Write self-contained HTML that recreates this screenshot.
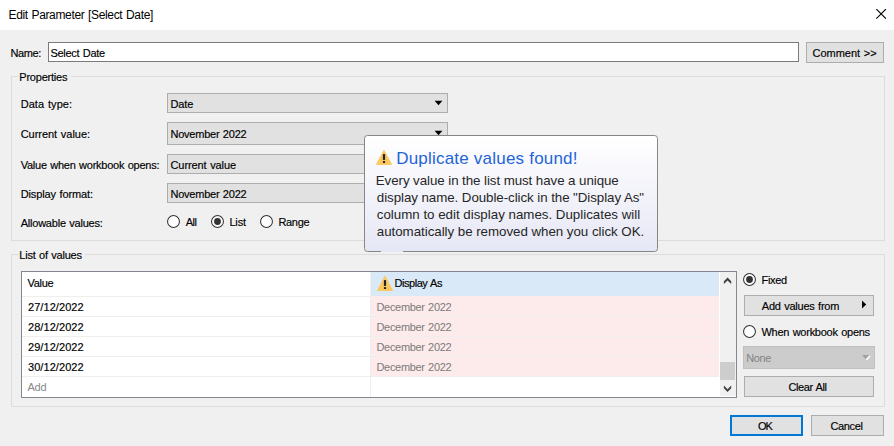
<!DOCTYPE html>
<html lang="en">
<head>
<meta charset="utf-8">
<title>Edit Parameter [Select Date]</title>
<style>
html,body{margin:0;padding:0;}
body{width:894px;height:446px;overflow:hidden;background:#f0f0f0;font-family:"Liberation Sans",sans-serif;position:relative;}
.abs,.t,.box{position:absolute;}
.t{white-space:pre;font-family:"Liberation Sans",sans-serif;}
.titlebar{left:0;top:0;width:894px;height:30px;background:#fff;}
.group{border:1px solid #dcdcdc;box-sizing:border-box;}
.combo{background:#e1e1e1;border:1px solid #adadad;box-sizing:border-box;}
.btn{background:#e1e1e1;border:1px solid #adadad;box-sizing:border-box;}
.b{-webkit-text-stroke:0.16px currentColor;}
.glabel{background:#f0f0f0;height:12px;}
</style>
</head>
<body>
<div class="abs titlebar"></div>
<svg class="abs" style="left:876px;top:9px" width="11" height="11" viewBox="0 0 11 11"><path d="M0.3 0.1 L9.9 9.7 M9.9 0.1 L0.3 9.7" stroke="#000" stroke-width="1.15" fill="none"/></svg>

<!-- name row -->
<div class="abs" style="left:48px;top:42px;width:751px;height:20px;box-sizing:border-box;border:1px solid #7a7a7a;background:#fff"></div>
<div class="abs btn" style="left:806px;top:42px;width:78px;height:21px"></div>

<!-- properties group -->
<div class="abs group" style="left:11px;top:76px;width:874px;height:165px"></div>
<div class="abs glabel" style="left:19px;top:70px;width:52px"></div>
<div class="abs combo" style="left:167px;top:93px;width:281px;height:20px"></div>
<svg class="abs" style="left:434px;top:100px" width="9" height="6" viewBox="0 0 9 6"><path d="M0.6 0.8 L8.4 0.8 L4.5 5.3 Z" fill="#000"/></svg>
<div class="abs combo" style="left:167px;top:122px;width:281px;height:23px"></div>
<svg class="abs" style="left:434px;top:130px" width="9" height="6" viewBox="0 0 9 6"><path d="M0.6 0.8 L8.4 0.8 L4.5 5.3 Z" fill="#000"/></svg>
<div class="abs combo" style="left:167px;top:154px;width:281px;height:20px"></div>
<div class="abs combo" style="left:167px;top:183px;width:281px;height:20px"></div>
<svg class="abs" style="left:167px;top:215px" width="13" height="13" viewBox="0 0 13 13"><circle cx="6.5" cy="6.5" r="5.95" fill="#fff" stroke="#333" stroke-width="1.05"/></svg>
<svg class="abs" style="left:211px;top:215px" width="13" height="13" viewBox="0 0 13 13"><circle cx="6.5" cy="6.5" r="5.95" fill="#fff" stroke="#333" stroke-width="1.05"/><circle cx="6.5" cy="6.5" r="3.4" fill="#333"/></svg>
<svg class="abs" style="left:260px;top:215px" width="13" height="13" viewBox="0 0 13 13"><circle cx="6.5" cy="6.5" r="5.95" fill="#fff" stroke="#333" stroke-width="1.05"/></svg>

<!-- list of values group -->
<div class="abs group" style="left:11px;top:254px;width:874px;height:153px"></div>
<div class="abs glabel" style="left:19px;top:248px;width:66px"></div>

<!-- table -->
<div class="abs" style="left:21px;top:271px;width:716px;height:127px;box-sizing:border-box;border:1px solid #828790;background:#fff"></div>
<div class="abs" style="left:370px;top:272px;width:349px;height:24px;background:#d9e9f8"></div>
<div class="abs" style="left:370px;top:296px;width:349px;height:81px;background:#fdeaea"></div>
<div class="abs" style="left:370px;top:272px;width:1px;height:125px;background:#eeeeee"></div>
<div class="abs" style="left:22px;top:296px;width:348px;height:1px;background:#eeeeee"></div>
<div class="abs" style="left:22px;top:316px;width:697px;height:1px;background:#eeeeee"></div>
<div class="abs" style="left:22px;top:336px;width:697px;height:1px;background:#eeeeee"></div>
<div class="abs" style="left:22px;top:356px;width:697px;height:1px;background:#eeeeee"></div>
<div class="abs" style="left:22px;top:376px;width:697px;height:1px;background:#eeeeee"></div>
<!-- scrollbar -->
<div class="abs" style="left:720px;top:272px;width:16px;height:124px;background:#f0f0f0"></div>
<div class="abs" style="left:720px;top:362px;width:15px;height:18px;background:#cdcdcd"></div>
<svg class="abs" style="left:720px;top:272px" width="16" height="125" viewBox="0 0 16 125"><path d="M7.55 5.6 L11.2 9.3 L11.2 12 L7.55 8.4 L3.9 12 L3.9 9.3 Z" fill="#404040"/><path d="M3.9 113.6 L7.55 117.2 L11.2 113.6 L11.2 116.3 L7.55 120 L3.9 116.3 Z" fill="#404040"/></svg>
<!-- warning icon in header -->
<svg class="abs" style="left:377px;top:276px" width="16" height="15" viewBox="0 0 16 15"><path d="M8 0.2 L15.6 14.5 L0.4 14.5 Z" fill="#fcc75c" stroke="#fcc75c" stroke-width="0.9" stroke-linejoin="round"/><rect x="6.9" y="4.1" width="2.2" height="5.8" fill="#1e2330"/><rect x="6.9" y="11.1" width="2.2" height="1.9" fill="#1e2330"/></svg>

<!-- right controls -->
<svg class="abs" style="left:743px;top:273px" width="13" height="13" viewBox="0 0 13 13"><circle cx="6.5" cy="6.5" r="5.95" fill="#fff" stroke="#333" stroke-width="1.05"/><circle cx="6.5" cy="6.5" r="3.4" fill="#333"/></svg>
<div class="abs btn" style="left:744px;top:295px;width:130px;height:21px"></div>
<svg class="abs" style="left:862px;top:300px" width="5" height="9" viewBox="0 0 5 9"><path d="M0 0.6 L4.2 4.5 L0 8.4 Z" fill="#000"/></svg>
<svg class="abs" style="left:743px;top:325px" width="13" height="13" viewBox="0 0 13 13"><circle cx="6.5" cy="6.5" r="5.95" fill="#fff" stroke="#333" stroke-width="1.05"/></svg>
<div class="abs" style="left:743px;top:346px;width:132px;height:23px;box-sizing:border-box;border:1px solid #bfbfbf;background:#cccccc"></div>
<svg class="abs" style="left:862px;top:355px" width="9" height="6" viewBox="0 0 9 6"><path d="M8 1 L4.3 5" stroke="#fff" stroke-width="1.3"/><path d="M0 0 L7 0 L3.5 4 Z" fill="#a0a0a0"/></svg>
<div class="abs btn" style="left:744px;top:376px;width:130px;height:21px"></div>

<!-- bottom buttons -->
<div class="abs btn" style="left:730px;top:415px;width:73px;height:21px;border:2px solid #0078d7"></div>
<div class="abs btn" style="left:811px;top:415px;width:73px;height:21px"></div>

<!-- tooltip -->
<div class="abs" style="left:364px;top:135px;width:294px;height:117px;box-sizing:border-box;border:1px solid #868686;border-radius:3.5px;background:linear-gradient(#ffffff,#e6e7f5)"></div>
<div class="abs" style="left:381px;top:251px;width:22px;height:1px;background:#e8e9f6"></div>
<svg class="abs" style="left:376px;top:150px" width="16" height="15" viewBox="0 0 16 15"><path d="M8 0.2 L15.6 14.5 L0.4 14.5 Z" fill="#fcc75c" stroke="#fcc75c" stroke-width="0.9" stroke-linejoin="round"/><rect x="6.9" y="4.1" width="2.2" height="5.8" fill="#1e2330"/><rect x="6.9" y="11.1" width="2.2" height="1.9" fill="#1e2330"/></svg>

<span class="t" style="left:8.50px;top:8.00px;font-size:12px;line-height:14px;letter-spacing:-0.346px;word-spacing:0.7px;color:#000">Edit Parameter [Select Date]</span>
<span class="t b" style="left:10.50px;top:47.00px;font-size:11px;line-height:12px;letter-spacing:-0.411px;word-spacing:0px;color:#000">Name:</span>
<span class="t b" style="left:50.50px;top:47.00px;font-size:11px;line-height:12px;letter-spacing:-0.295px;word-spacing:0.7px;color:#000">Select Date</span>
<span class="t b" style="left:812.60px;top:47.00px;font-size:11px;line-height:12px;letter-spacing:-0.029px;word-spacing:0.7px;color:#000">Comment &gt;&gt;</span>
<span class="t b" style="left:19.30px;top:71.00px;font-size:11px;line-height:12px;letter-spacing:-0.215px;word-spacing:0px;color:#000">Properties</span>
<span class="t b" style="left:19.30px;top:249.00px;font-size:11px;line-height:12px;letter-spacing:-0.223px;word-spacing:0.7px;color:#000">List of values</span>
<span class="t b" style="left:20.70px;top:98.00px;font-size:11px;line-height:12px;letter-spacing:0.057px;word-spacing:0.7px;color:#000">Data type:</span>
<span class="t b" style="left:20.70px;top:128.00px;font-size:11px;line-height:12px;letter-spacing:-0.033px;word-spacing:0.7px;color:#000">Current value:</span>
<span class="t b" style="left:20.70px;top:159.00px;font-size:11px;line-height:12px;letter-spacing:-0.249px;word-spacing:0.7px;color:#000">Value when workbook opens:</span>
<span class="t b" style="left:20.70px;top:188.00px;font-size:11px;line-height:12px;letter-spacing:-0.121px;word-spacing:0.7px;color:#000">Display format:</span>
<span class="t b" style="left:20.70px;top:217.00px;font-size:11px;line-height:12px;letter-spacing:-0.221px;word-spacing:0.7px;color:#000">Allowable values:</span>
<span class="t b" style="left:170.50px;top:98.00px;font-size:11px;line-height:12px;letter-spacing:-0.106px;word-spacing:0px;color:#000">Date</span>
<span class="t b" style="left:170.50px;top:128.00px;font-size:11px;line-height:12px;letter-spacing:-0.237px;word-spacing:0.7px;color:#000">November 2022</span>
<span class="t b" style="left:170.50px;top:159.00px;font-size:11px;line-height:12px;letter-spacing:-0.093px;word-spacing:0.7px;color:#000">Current value</span>
<span class="t b" style="left:170.50px;top:188.00px;font-size:11px;line-height:12px;letter-spacing:-0.237px;word-spacing:0.7px;color:#000">November 2022</span>
<span class="t b" style="left:185.80px;top:216.00px;font-size:11px;line-height:12px;letter-spacing:-0.540px;word-spacing:0px;color:#000">All</span>
<span class="t b" style="left:229.40px;top:216.00px;font-size:11px;line-height:12px;letter-spacing:-0.154px;word-spacing:0px;color:#000">List</span>
<span class="t b" style="left:278.50px;top:216.00px;font-size:11px;line-height:12px;letter-spacing:-0.349px;word-spacing:0px;color:#000">Range</span>
<span class="t b" style="left:27.50px;top:277.00px;font-size:11px;line-height:12px;letter-spacing:-0.300px;word-spacing:0px;color:#000">Value</span>
<span class="t b" style="left:394.50px;top:277.00px;font-size:11px;line-height:12px;letter-spacing:-0.462px;word-spacing:0.7px;color:#000">Display As</span>
<span class="t b" style="left:28.00px;top:301.00px;font-size:11px;line-height:12px;letter-spacing:0.063px;word-spacing:0px;color:#000">27/12/2022</span>
<span class="t" style="left:376.50px;top:301.00px;font-size:11px;line-height:12px;letter-spacing:-0.321px;word-spacing:0.7px;color:#7b7b7b">December 2022</span>
<span class="t b" style="left:28.00px;top:321.00px;font-size:11px;line-height:12px;letter-spacing:0.063px;word-spacing:0px;color:#000">28/12/2022</span>
<span class="t" style="left:376.50px;top:321.00px;font-size:11px;line-height:12px;letter-spacing:-0.321px;word-spacing:0.7px;color:#7b7b7b">December 2022</span>
<span class="t b" style="left:28.00px;top:341.00px;font-size:11px;line-height:12px;letter-spacing:0.063px;word-spacing:0px;color:#000">29/12/2022</span>
<span class="t" style="left:376.50px;top:341.00px;font-size:11px;line-height:12px;letter-spacing:-0.321px;word-spacing:0.7px;color:#7b7b7b">December 2022</span>
<span class="t b" style="left:28.00px;top:361.00px;font-size:11px;line-height:12px;letter-spacing:0.063px;word-spacing:0px;color:#000">30/12/2022</span>
<span class="t" style="left:376.50px;top:361.00px;font-size:11px;line-height:12px;letter-spacing:-0.321px;word-spacing:0.7px;color:#7b7b7b">December 2022</span>
<span class="t" style="left:27.50px;top:381.00px;font-size:11px;line-height:12px;letter-spacing:-0.227px;word-spacing:0px;color:#8a8a8a">Add</span>
<span class="t b" style="left:761.50px;top:274.00px;font-size:11px;line-height:12px;letter-spacing:-0.320px;word-spacing:0px;color:#000">Fixed</span>
<span class="t b" style="left:761.80px;top:300.00px;font-size:11px;line-height:12px;letter-spacing:-0.237px;word-spacing:0.7px;color:#000">Add values from</span>
<span class="t b" style="left:761.50px;top:326.00px;font-size:11px;line-height:12px;letter-spacing:-0.261px;word-spacing:0.7px;color:#000">When workbook opens</span>
<span class="t" style="left:746.30px;top:352.00px;font-size:11px;line-height:12px;letter-spacing:-0.426px;word-spacing:0px;color:#838383">None</span>
<span class="t b" style="left:788.50px;top:381.00px;font-size:11px;line-height:12px;letter-spacing:-0.390px;word-spacing:0.7px;color:#000">Clear All</span>
<span class="t b" style="left:758.00px;top:420.00px;font-size:11px;line-height:12px;letter-spacing:-0.956px;word-spacing:0px;color:#000">OK</span>
<span class="t b" style="left:830.50px;top:420.00px;font-size:11px;line-height:12px;letter-spacing:-0.359px;word-spacing:0px;color:#000">Cancel</span>
<span class="t" style="left:396.20px;top:149.00px;font-size:17px;line-height:19px;letter-spacing:0.209px;word-spacing:0px;color:#2364d7">Duplicate values found!</span>
<span class="t" style="left:375.80px;top:172.70px;font-size:13.33px;line-height:15px;letter-spacing:-0.074px;word-spacing:0px;color:#262626">Every value in the list must have a unique</span>
<span class="t" style="left:376.80px;top:189.70px;font-size:13.33px;line-height:15px;letter-spacing:-0.065px;word-spacing:0px;color:#262626">display name. Double-click in the &quot;Display As&quot;</span>
<span class="t" style="left:376.80px;top:206.70px;font-size:13.33px;line-height:15px;letter-spacing:-0.008px;word-spacing:0px;color:#262626">column to edit display names. Duplicates will</span>
<span class="t" style="left:376.80px;top:223.70px;font-size:13.33px;line-height:15px;letter-spacing:-0.036px;word-spacing:0px;color:#262626">automatically be removed when you click OK.</span>
</body>
</html>
